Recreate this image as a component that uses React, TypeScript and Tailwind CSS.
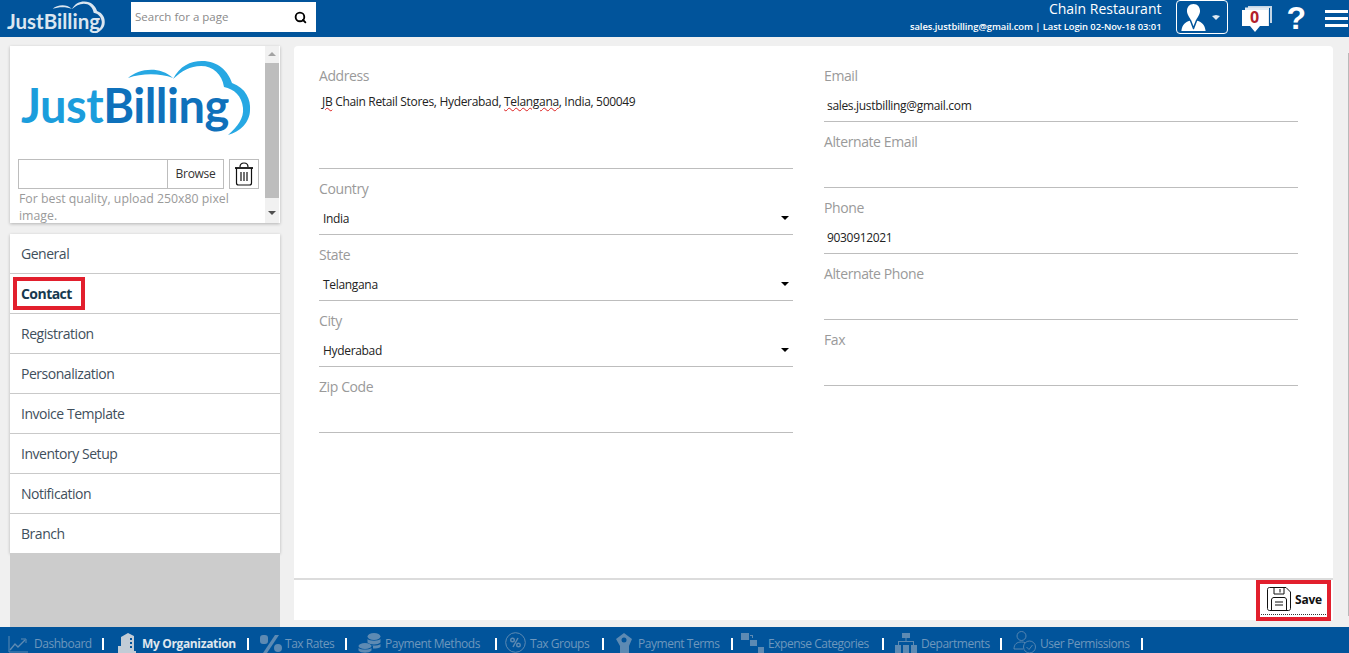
import React from "react";
import { Search } from "lucide-react";

function Cloud({ color, className }: { color: string; className: string }) {
  return (
    <svg viewBox="100 0 150 100" className={className} fill={color}>
      <path d="M118 32C128 23 149 19 163 32C150 27 132 27 118 32Z" />
      <path d="M163 33C170 20 180 15 192 15C208 15 218 25 222 37C236 42 241 54 240 64C240 76 230 86 218 89C228 80 234 72 233 62C232 50 224 43 214 41C212 28 203 20 191 20C180 20 172 25 163 33Z" />
    </svg>
  );
}

function Field({ label, value, tall, select, plain }: { label: string; value?: React.ReactNode; tall?: boolean; select?: boolean; plain?: boolean }) {
  return (
    <div className={`flex flex-col border-b border-[#bdbdbd] pt-[10px] ${tall ? "h-[113px]" : "h-[66px]"}`}>
      <div className="h-[20px] text-[14px] leading-[20px] tracking-[-0.4px] text-[#9a9a9a]">{label}</div>
      {value && (
        <div className={`flex items-center justify-between text-[12px] leading-[20px] tracking-[-0.32px] text-[#222] ${tall ? "mt-[6px] pl-[3px]" : "mt-[10px]"} ${plain ? "pl-[3px]" : ""} ${select ? "pl-[4px] pr-[4px]" : ""}`}>
          <span>{value}</span>
          {select && <span className="mt-[-2px] h-0 w-0 border-x-[4px] border-t-[4px] border-x-transparent border-t-black" />}
        </div>
      )}
    </div>
  );
}

const navItems = ["General", "Contact", "Registration", "Personalization", "Invoice Template", "Inventory Setup", "Notification", "Branch"];

const dim = "#5d8ab3";

function Bar({ w, active, icon, iconW, label }: { w: string; active?: boolean; icon: React.ReactNode; iconW: string; label: string }) {
  return (
    <div className="flex items-center">
      <div className={`flex justify-center ${iconW}`}>{icon}</div>
      <span className={`${w} whitespace-nowrap text-[12px] ${active ? "font-bold tracking-[-0.35px] text-[#dfe6ee]" : "tracking-[-0.47px] text-[#6d97bd]"}`}>{label}</span>
      <span className="h-[12px] w-[2px] bg-white" />
    </div>
  );
}

export default function App() {
  return (
    <div className="relative flex h-[653px] w-[1349px] flex-col overflow-hidden bg-[#f0f0f0] font-['Open_Sans',sans-serif]">
      {/* top bar */}
      <header className="flex h-[37px] items-start bg-[#01549b] pr-[1px] text-white">
        <div className="relative ml-[7px] h-[37px] w-[98px]">
          <span className="absolute left-0 top-[9px] font-['Lato',sans-serif] text-[20.5px] font-bold leading-[24px] text-[#dbe6f0]">JustBilling</span>
          <Cloud color="#dbe6f0" className="absolute left-[38px] top-[-5px] h-[43px] w-[64px]" />
        </div>
        <div className="ml-[26px] mt-[2px] flex h-[30px] w-[185px] items-center justify-between bg-white pl-[4px] pr-[9px]">
          <span className="text-[11.5px] text-[#8a8a8a]">Search for a page</span>
          <Search size={13} strokeWidth={3.4} className="text-black" />
        </div>
        <div className="ml-auto mr-[15px] flex flex-col items-end">
          <span className="text-[14px] leading-[18px]">Chain Restaurant</span>
          <span className="mt-[2px] text-[9.4px] font-semibold leading-[14px] tracking-[-0.06px]">sales.justbilling@gmail.com | Last Login 02-Nov-18 03:01</span>
        </div>
        <div className="flex h-[34px] w-[52px] items-center rounded-[4px] border border-white pl-[4px]">
          <svg viewBox="0 0 26 30" className="h-[28px] w-[25px]" fill="white">
            <path d="M13 1C17.5 1 20 4.5 20 8.5C20 12 17 16 15.5 18.5L13 25L10.5 18.5C9 16 6 12 6 8.5C6 4.5 8.5 1 13 1Z" />
            <path d="M9 19L12.5 28H13.5L17 19C22 20.5 25 23 26 30H0C1 23 4 20.5 9 19Z" />
          </svg>
          <svg viewBox="0 0 8 5" className="ml-[6px] h-[5px] w-[8px]" fill="#dfe9f2"><path d="M0 1L4 0L8 1L4 5Z" /></svg>
        </div>
        <svg viewBox="0 0 30 26" className="ml-[14px] mt-[6px] h-[26px] w-[30px]">
          <path d="M6 0H30V17H28V2H6Z" fill="#c4d5e5" />
          <path d="M3 1.5H27V20H25V4H3Z" fill="#e2eaf2" />
          <path d="M0 4H26V20H18L13 26L8 20H0Z" fill="white" />
        </svg>
        <span className="absolute left-[1250px] top-[6px] text-[16px] font-bold leading-[22px] text-[#b3202a]">0</span>
        <span className="ml-[14px] font-['Liberation_Sans',sans-serif] text-[32px] font-bold leading-[37px]">?</span>
        <div className="ml-[19px] mt-[10px] flex w-[23px] flex-col gap-[4px]">
          <span className="h-[3px] bg-white" />
          <span className="h-[3px] bg-white" />
          <span className="h-[3px] bg-white" />
        </div>
      </header>

      <div className="flex min-h-0 flex-1">
        {/* sidebar */}
        <aside className="ml-[10px] flex w-[270px] flex-col pt-[9px]">
          <div className="flex h-[177px] overflow-hidden bg-white shadow-[0_1px_3px_rgba(0,0,0,0.25)]">
            <div className="relative w-[255px] pl-[8px]">
              <span className="absolute left-[11px] top-[31px] font-['Lato',sans-serif] text-[47px] font-bold leading-[56px] tracking-[-0.5px] text-[#1b9ddc]">
                Just<span className="text-[#0f71bb]">Billing</span>
              </span>
              <Cloud color="#27a8e3" className="absolute left-[100px] top-0 h-[100px] w-[150px]" />
              <div className="mt-[113px] flex h-[30px] items-stretch">
                <div className="flex w-[206px] border border-[#bdbdbd]">
                  <div className="flex-1" />
                  <div className="flex w-[56px] items-center justify-center border-l border-[#bdbdbd] text-[12px] tracking-[-0.3px] text-[#333]">Browse</div>
                </div>
                <div className="ml-[5px] flex w-[30px] items-center justify-center border border-[#bdbdbd]">
                  <svg viewBox="0 0 20 24" className="h-[24px] w-[20px]" fill="none" stroke="#111" strokeWidth="1.2">
                    <path d="M1 6H19" strokeWidth="1.8" />
                    <path d="M6 5C6 2 8 1 10 1C12 1 14 2 14 5" />
                    <path d="M2.5 6V21C2.5 22.2 3.3 23 4.5 23H15.5C16.7 23 17.5 22.2 17.5 21V6" />
                    <path d="M7 10V19M10 10V19M13 10V19" />
                  </svg>
                </div>
              </div>
              <p className="ml-[1px] mt-[1px] w-[240px] text-[12.3px] leading-[17px] text-[#9a9a9a]">For best quality, upload 250x80 pixel image.</p>
            </div>
            <div className="flex w-[14px] flex-col items-center bg-[#f1f1f1]">
              <span className="mt-[6px] h-0 w-0 border-x-[4px] border-b-[4px] border-x-transparent border-b-[#a3a3a3]" />
              <span className="mt-[7px] h-[135px] w-full bg-[#bdbdbd]" />
              <span className="mt-[13px] h-0 w-0 border-x-[4px] border-t-[4px] border-x-transparent border-t-[#505050]" />
            </div>
          </div>
          <nav className="mt-[11px] flex flex-col bg-white shadow-[0_1px_3px_rgba(0,0,0,0.25)]">
            {navItems.map((n, i) => (
              <div
                key={n}
                className={`flex items-center pl-[11px] text-[14px] ${i < navItems.length - 1 ? "h-[40px] border-b border-[#c9c9c9]" : "h-[39px]"} ${n === "Contact" ? "font-bold tracking-[-0.55px] text-[#17394f]" : "tracking-[-0.47px] text-[#3f4f5c]"}`}
              >
                {n}
              </div>
            ))}
          </nav>
          <div className="flex-1 bg-[#cccccc]" />
        </aside>

        {/* main */}
        <main className="ml-[14px] flex w-[1039px] flex-col pb-[7px] pt-[9px]">
          <div className="grid flex-1 grid-cols-[474px_474px] content-start gap-x-[31px] rounded-t-[4px] bg-white px-[25px] pt-[10px]">
            <div className="flex flex-col">
              <Field
                tall
                label="Address"
                value={
                  <>
                    <span className="underline decoration-[#d22] decoration-wavy decoration-1">JB</span> Chain Retail Stores, Hyderabad,{" "}
                    <span className="underline decoration-[#d22] decoration-wavy decoration-1">Telangana</span>, India, 500049
                  </>
                }
              />
              <Field select label="Country" value="India" />
              <Field select label="State" value="Telangana" />
              <Field select label="City" value="Hyderabad" />
              <Field label="Zip Code" />
            </div>
            <div className="flex flex-col">
              <Field plain label="Email" value="sales.justbilling@gmail.com" />
              <Field label="Alternate Email" />
              <Field plain label="Phone" value="9030912021" />
              <Field label="Alternate Phone" />
              <Field label="Fax" />
            </div>
          </div>
          <div className="flex h-[42px] items-start justify-end border-t-2 border-[#dcdcdc] bg-white pr-[7px] pt-[7px]">
            <div className="flex h-[28px] items-start border-b border-dotted border-[#333] pl-[6px] pr-[4px]">
              <svg viewBox="0 0 24 24" className="h-[24px] w-[24px]" fill="none" stroke="#111" strokeWidth="1">
                <path d="M2.5 0.5H19L23.5 5V21.5C23.5 22.7 22.7 23.5 21.5 23.5H2.5C1.3 23.5 0.5 22.7 0.5 21.5V2.5C0.5 1.3 1.3 0.5 2.5 0.5Z" />
                <path d="M7 0.5V7H17V0.5M13 2V5.5" />
                <path d="M4.5 23.5V13C4.5 11.5 5.5 10.5 7 10.5H17C18.5 10.5 19.5 11.5 19.5 13V23.5" />
                <path d="M8 15H16M8 18H16" />
              </svg>
              <span className="ml-[4px] mt-[1px] text-[12px] font-bold leading-[24px] tracking-[-0.2px] text-[#111]">Save</span>
            </div>
          </div>
        </main>
      </div>

      {/* bottom bar */}
      <footer className="flex h-[26px] items-center bg-[#01549b] pl-[7px] pt-[7px]">
        <Bar iconW="w-[21px]" w="w-[74px] pl-[6px]" label="Dashboard" icon={
          <svg viewBox="0 0 20 18" className="h-[18px] w-[20px]" fill="none" stroke={dim}><path d="M1 1V17H20" /><path d="M2 15L7 9L10 12L17 5" strokeWidth="1.4" /><path d="M13 4H18V8" /></svg>
        } />
        <Bar iconW="ml-[13px] w-[20px]" w="w-[110px] pl-[5px]" active label="My Organization" icon={
          <svg viewBox="0 0 18 20" className="mt-[-2px] h-[20px] w-[18px]" fill="#c2ccd6"><path d="M3 4L10 0L16 3V18H18V20H0V13H3Z" /><path d="M12 5H14V7H12ZM12 9H14V11H12ZM12 13H14V15H12Z" fill="#01549b" /></svg>
        } />
        <Bar iconW="ml-[11px] w-[22px]" w="w-[63px] pl-[3px]" label="Tax Rates" icon={
          <svg viewBox="0 0 22 18" className="h-[18px] w-[22px]" fill={dim}><rect x="0" y="0" width="8" height="9" rx="3" /><rect x="14" y="9" width="8" height="8" rx="4" /><path d="M15 0H19L7 18H3Z" /></svg>
        } />
        <Bar iconW="ml-[11px] w-[23px]" w="w-[114px] pl-[4px]" label="Payment Methods" icon={
          <svg viewBox="0 0 23 20" className="mt-[-2px] h-[20px] w-[23px]" fill={dim}><ellipse cx="16" cy="3.5" rx="6.5" ry="3.5" /><path d="M9.5 6C11 8 20 8.5 22.5 6V9.5C20 12 12 12 9.5 9.5Z" /><path d="M9.5 11C12 13 20 13 22.5 11V14C21 15 18 15.5 15 15.5V13C13 12.5 10 12 9.5 11Z" /><ellipse cx="7" cy="13" rx="6.5" ry="3" /><path d="M0.5 15C3 17 11 17 13.5 15V17.5C11 20.5 3 20.5 0.5 17.5Z" /></svg>
        } />
        <Bar iconW="ml-[8px] w-[21px]" w="w-[76px] pl-[4px]" label="Tax Groups" icon={
          <svg viewBox="0 0 21 21" className="mt-[-2px] h-[21px] w-[21px]" fill="none" stroke={dim}><circle cx="10.5" cy="10.5" r="9.8" /><path d="M13 6L8 15" strokeWidth="1.5" /><circle cx="7.5" cy="8" r="1.8" strokeWidth="1.4" /><circle cx="13.5" cy="13" r="1.8" strokeWidth="1.4" /></svg>
        } />
        <Bar iconW="ml-[10px] w-[19px]" w="w-[98px] pl-[5px]" label="Payment Terms" icon={
          <svg viewBox="0 0 18 20" className="mt-[-2px] h-[20px] w-[18px]" fill={dim}><path d="M9 0L17 6L14 13V20H5V13L1 6Z" /><circle cx="9" cy="7" r="2.5" fill="#01549b" /></svg>
        } />
        <Bar iconW="ml-[8px] w-[23px]" w="w-[118px] pl-[4px]" label="Expense Categories" icon={
          <svg viewBox="0 0 23 20" className="mt-[-2px] h-[20px] w-[23px]" fill={dim}><rect x="0" y="0" width="8" height="7" /><rect x="9" y="7" width="7" height="6" /><rect x="17" y="14" width="6" height="6" /><path d="M9 2H12V5H11V3H9Z" /></svg>
        } />
        <Bar iconW="ml-[11px] w-[22px]" w="w-[83px] pl-[4px]" label="Departments" icon={
          <svg viewBox="0 0 22 20" className="mt-[-2px] h-[20px] w-[22px]" fill={dim}><rect x="7" y="0" width="8" height="5" /><path d="M10.5 5H11.5V8H19V12H18V9H4V12H3V8H10.5Z" /><rect x="0" y="12" width="6" height="8" /><rect x="8" y="12" width="6" height="8" /><rect x="16" y="12" width="6" height="8" /></svg>
        } />
        <Bar iconW="ml-[11px] w-[23px]" w="w-[105px] pl-[4px]" label="User Permissions" icon={
          <svg viewBox="0 0 23 22" className="mt-[-3px] h-[22px] w-[23px]" fill="none" stroke={dim} strokeWidth="0.9"><circle cx="8.5" cy="5" r="4.5" /><path d="M1 18C1 13 4 11 8.5 11C10 11 11 11.2 12 11.6" /><path d="M1 18H10" /><circle cx="16.5" cy="16" r="6" /><path d="M13.5 16L16 18.5L19.5 14" /></svg>
        } />
      </footer>

      {/* annotation frames */}
      <div className="absolute left-[13px] top-[277px] h-[33px] w-[72px] border-[4px] border-[#e21f2d]" />
      <div className="absolute left-[1256px] top-[580px] h-[41px] w-[75px] border-[4px] border-[#e21f2d]" />
      {/* page scrollbar sliver */}
      <div className="absolute left-[1348px] top-[53px] h-[563px] w-[1px] bg-[#b9b9b9]" />
    </div>
  );
}
